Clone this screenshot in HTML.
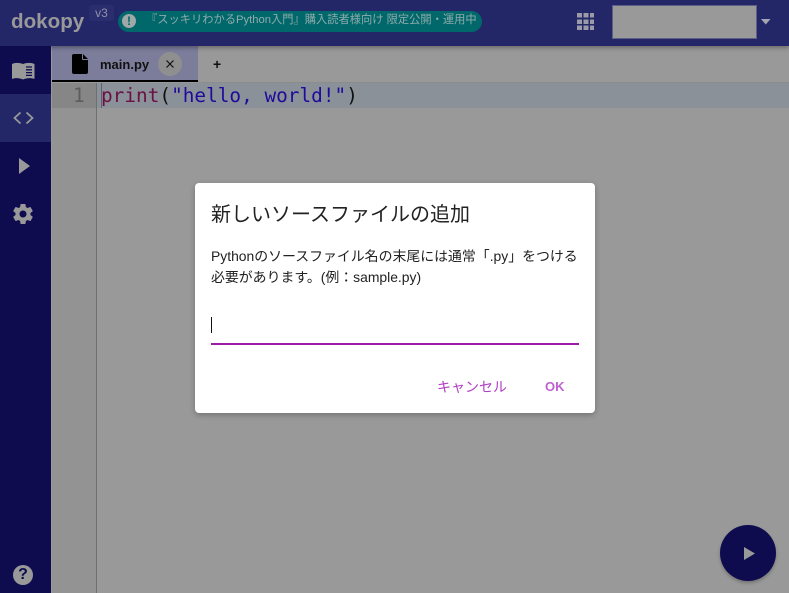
<!DOCTYPE html>
<html lang="ja"><head><meta charset="utf-8"><style>
html,body{margin:0;padding:0;width:789px;height:593px;overflow:hidden;background:#999;font-family:"Liberation Sans","Noto Sans CJK JP",sans-serif}
.a{position:absolute;white-space:nowrap}
svg{position:absolute;display:block}
</style></head><body>
<div class="a" style="left:52px;top:46px;width:737px;height:36px;background:#999"></div>
<div class="a" style="left:52px;top:46px;width:146px;height:35px;background:#7b7d9b"></div>
<div class="a" style="left:52px;top:80px;width:146px;height:2px;background:#000"></div>
<div class="a" style="left:198px;top:82px;width:591px;height:1px;background:#8c8c8c"></div>
<div class="a" style="left:0;top:0;width:789px;height:46px;background:#232768;box-shadow:0 2px 4px rgba(0,0,0,.3)"></div>
<div class="a" style="left:11px;top:6px;font-size:20.600px;line-height:32px;font-weight:700;color:#999">dokopy</div>
<div class="a" style="left:89px;top:5px;width:25px;height:16px;background:#2a2e6e;border-radius:3px;color:#8f90a8;font-size:12px;line-height:16px;text-align:center">v3</div>
<div class="a" style="left:118px;top:11px;width:364px;height:21px;background:#00686b;border-radius:11px"></div>
<div class="a" style="left:122px;top:14px;width:14px;height:14px;background:#a0a8a8;border-radius:50%;color:#00686b;font-size:12px;line-height:14px;font-weight:700;text-align:center">!</div>
<div class="a" style="left:146px;top:10px;font-size:11.250px;line-height:20px;color:#8fabac">『スッキリわかるPython入門』購入読者様向け 限定公開・運用中</div>
<svg style="left:577px;top:13px" width="18" height="17" fill="#9a9aa8"><path d="M0 0h5v4.500H0zM6.500 0h5v4.500h-5zM13 0h4v4.500h-4zM0 6.500h5V11H0zM6.500 6.500h5V11h-5zM13 6.500h4V11h-4zM0 12.500h5V17H0zM6.500 12.500h5V17h-5zM13 12.500h4V17h-4z"/></svg>
<div class="a" style="left:612px;top:5px;width:143px;height:32px;background:#999;border:1px solid #5d5f88"></div>
<svg style="left:761px;top:19px" width="10" height="6"><path d="M0 0h9.500L4.750 5.500z" fill="#a5a5b0"/></svg>
<div class="a" style="left:0;top:46px;width:51px;height:547px;background:#0e0c4e"></div>
<div class="a" style="left:0;top:94px;width:51px;height:48px;background:#232768"></div>
<svg style="left:12px;top:62px" width="23" height="18" fill="#999"><path d="M0 2C3 .5 7 .5 11 2v15.500C7 15.800 3 15.800 0 17zM11 2c4-1.500 8-1.500 11.500 0v15c-3.500-1.200-7.500-1.200-11.500.5z"/><path d="M14 5h6M14 7.800h6M14 10.600h6M14 13.400h6" stroke="#0e0c4e" stroke-width="1.300"/></svg>
<svg style="left:13px;top:111px" width="21" height="14" fill="none" stroke="#999" stroke-width="1.800"><path d="M7.500 1.500 1.500 7l6 5.500M13.500 1.500l6 5.500-6 5.500"/></svg>
<svg style="left:19px;top:158px" width="12" height="16"><path d="M0 0l11 8-11 8z" fill="#999"/></svg>
<svg style="left:11px;top:202px" width="24" height="24" viewBox="0 0 24 24"><path fill="#999" d="M19.430 12.980c.040-.320.070-.640.070-.980s-.030-.660-.070-.980l2.110-1.650c.190-.150.240-.420.120-.640l-2-3.460c-.120-.220-.390-.300-.610-.220l-2.490 1c-.520-.400-1.080-.730-1.690-.980l-.380-2.650C14.460 2.180 14.250 2 14 2h-4c-.250 0-.460.180-.490.420l-.380 2.650c-.610.250-1.170.590-1.690.980l-2.490-1c-.230-.090-.490 0-.610.220l-2 3.460c-.130.220-.070.490.120.640l2.110 1.650c-.040.320-.070.650-.070.980s.030.660.070.980l-2.110 1.650c-.190.150-.240.420-.120.640l2 3.460c.120.220.390.300.610.220l2.490-1c.520.400 1.080.730 1.690.980l.380 2.650c.030.240.240.420.490.420h4c.250 0 .460-.180.490-.420l.380-2.650c.610-.250 1.170-.590 1.690-.980l2.490 1c.230.090.490 0 .610-.220l2-3.460c.120-.220.070-.490-.120-.640l-2.110-1.650zM12 15.500c-1.930 0-3.500-1.570-3.500-3.500s1.570-3.500 3.500-3.500 3.500 1.570 3.500 3.500-1.570 3.500-3.500 3.500z"/></svg>
<div class="a" style="left:13px;top:565px;width:20px;height:20px;border-radius:50%;background:#999;color:#0e0c4e;font-size:16px;line-height:20px;font-weight:700;text-align:center">?</div>
<svg style="left:72px;top:54px" width="16" height="20"><path d="M2 0h8v5a1 1 0 0 0 1 1h5v12a2 2 0 0 1-2 2H2a2 2 0 0 1-2-2V2a2 2 0 0 1 2-2zM11 0l5 5h-5z" fill="#000"/></svg>
<div class="a" style="left:100px;top:55px;font-size:13px;line-height:20px;font-weight:700;color:#111">main.py</div>
<div class="a" style="left:158px;top:52px;width:24px;height:24px;border-radius:50%;background:#8f8f8f"></div>
<svg style="left:166px;top:60px" width="8" height="8" stroke="#111" stroke-width="1.200"><path d="M.5.500l7 7M7.500.500l-7 7"/></svg>
<div class="a" style="left:213px;top:54px;font-size:14px;line-height:20px;font-weight:700;color:#111">+</div>
<div class="a" style="left:52px;top:83px;width:44px;height:510px;background:#939393"></div>
<div class="a" style="left:52px;top:83px;width:44px;height:25px;background:#868686"></div>
<div class="a" style="left:96px;top:83px;width:1px;height:510px;background:#6f6f6f"></div>
<div class="a" style="left:97px;top:83px;width:692px;height:25px;background:#8b9198"></div>
<div class="a" style="left:101px;top:83px;width:1px;height:25px;background:#5c6070"></div>
<div class="a" style="left:73px;top:83px;font:19.400px/25px 'DejaVu Sans Mono',monospace;color:#5d5d5d">1</div>
<div class="a" style="left:101px;top:83px;font:19.400px/25px 'DejaVu Sans Mono',monospace;color:#111"><span style="color:#6b0f45">print</span>(<span style="color:#1f0a9c">"hello, world!"</span>)</div>
<div class="a" style="left:720px;top:525px;width:56px;height:56px;border-radius:50%;background:#0e0c4e;box-shadow:0 2px 3px rgba(0,0,0,.25)"></div>
<svg style="left:744px;top:547px" width="12" height="13"><path d="M0 0l11 6.500-11 6.500z" fill="#999"/></svg>
<div class="a" style="left:195px;top:183px;width:400px;height:230px;background:#fff;border-radius:4px;box-shadow:0 2px 6px rgba(0,0,0,.25)"></div>
<div class="a" style="left:211px;top:200px;font-size:20px;line-height:30px;color:#222">新しいソースファイルの追加</div>
<div class="a" style="left:211px;top:246px;font-size:13.900px;line-height:21px;color:#222">Pythonのソースファイル名の末尾には通常「.py」をつける<br>必要があります。(例：sample.py)</div>
<div class="a" style="left:211px;top:317px;width:1px;height:16px;background:#111"></div>
<div class="a" style="left:211px;top:343px;width:368px;height:2px;background:#a01aa8"></div>
<div class="a" style="left:437px;top:377px;font-size:14px;line-height:20px;color:#b13cc4">キャンセル</div>
<div class="a" style="left:545px;top:377px;font-size:13px;line-height:20px;font-weight:700;color:#c060d0">OK</div>
</body></html>
